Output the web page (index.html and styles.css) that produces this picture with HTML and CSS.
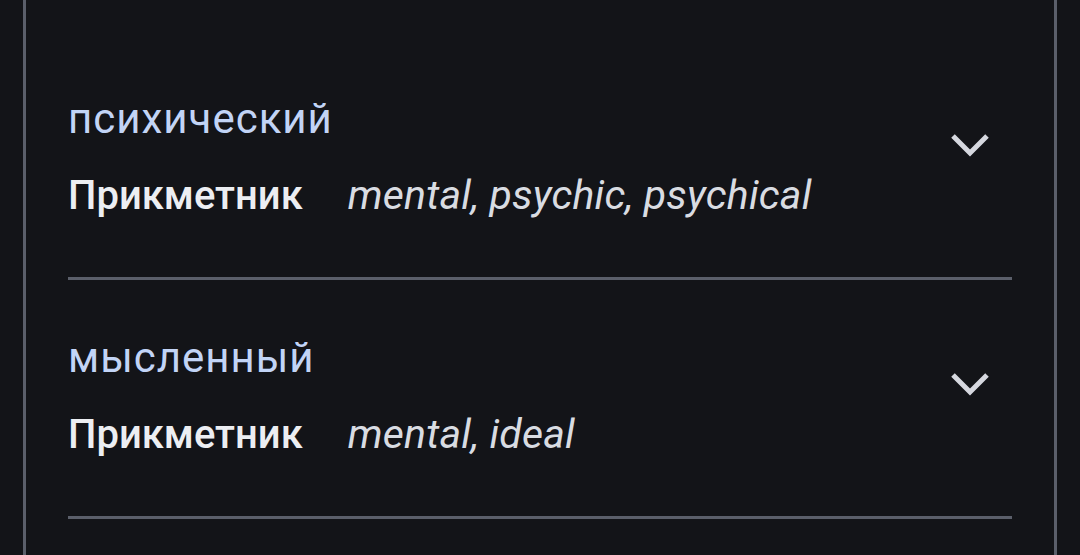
FILE: index.html
```html
<!DOCTYPE html>
<html lang="uk">
<head>
  <meta charset="utf-8">
  <meta name="viewport" content="width=device-width, initial-scale=1">
  <title>Переклади</title>
  <link rel="stylesheet" href="styles.css">
</head>
<body>

  <main class="card">
    <ul class="entries">
      <li class="entry">
        <div class="entry-text">
          <p class="word">психический</p>
          <p class="meta"><b>Прикметник</b> <i>mental, psychic, psychical</i></p>
        </div>
        <button class="toggle" aria-label="Розгорнути">
          <svg viewBox="0 0 42 26" width="42" height="26"><polyline points="4,4 21,21 38,4" /></svg>
        </button>
      </li>
      <li class="entry">
        <div class="entry-text">
          <p class="word">мысленный</p>
          <p class="meta"><b>Прикметник</b> <i>mental, ideal</i></p>
        </div>
        <button class="toggle" aria-label="Розгорнути">
          <svg viewBox="0 0 42 26" width="42" height="26"><polyline points="4,4 21,21 38,4" /></svg>
        </button>
      </li>
    </ul>
  </main>

</body>
</html>
```

FILE: styles.css
```css
* {
  margin: 0;
  padding: 0;
  box-sizing: border-box;
}

:root {
  --bg: #131418;
  --line: #5b5f6a;
  --blue: #c2d4f6;
  --white: #eceef2;
  --soft: #d9dce2;
  --icon: #d6d8df;
}

html {
  font-family: Roboto, "Noto Sans", sans-serif;
  font-size: 40px;
}

body {
  background: var(--bg);
  color: var(--white);
  min-height: 100vh;
  overflow: hidden;
}

.card {
  margin-left: 23px;
  width: 1034px;
  min-height: 100vh;
  border-left: 3px solid var(--line);
  border-right: 3px solid var(--line);
  padding: 41px 42px 0 42px;
}

.entries {
  list-style: none;
}

.entry {
  display: flex;
  align-items: flex-start;
  justify-content: space-between;
  padding: 54px 0 57px 0;
  border-bottom: 3px solid var(--line);
}

.entry-text p {
  line-height: 48px;
  white-space: nowrap;
}
.entry-text p + p {
  margin-top: 28px;
}

.word {
  color: var(--blue);
  font-size: 42px;
  font-weight: 400;
  letter-spacing: 1px;
}

.meta b {
  font-weight: 500;
  margin-right: 35px;
}
.meta i {
  color: var(--soft);
  font-size: 41px;
  font-weight: 400;
  letter-spacing: 0.2px;
}

.toggle {
  background: transparent;
  border: 0;
  margin-top: 37px;
  margin-right: 21px;
  line-height: 0;
  cursor: pointer;
}
.toggle svg {
  fill: none;
  stroke: var(--icon);
  stroke-width: 5;
}
```
